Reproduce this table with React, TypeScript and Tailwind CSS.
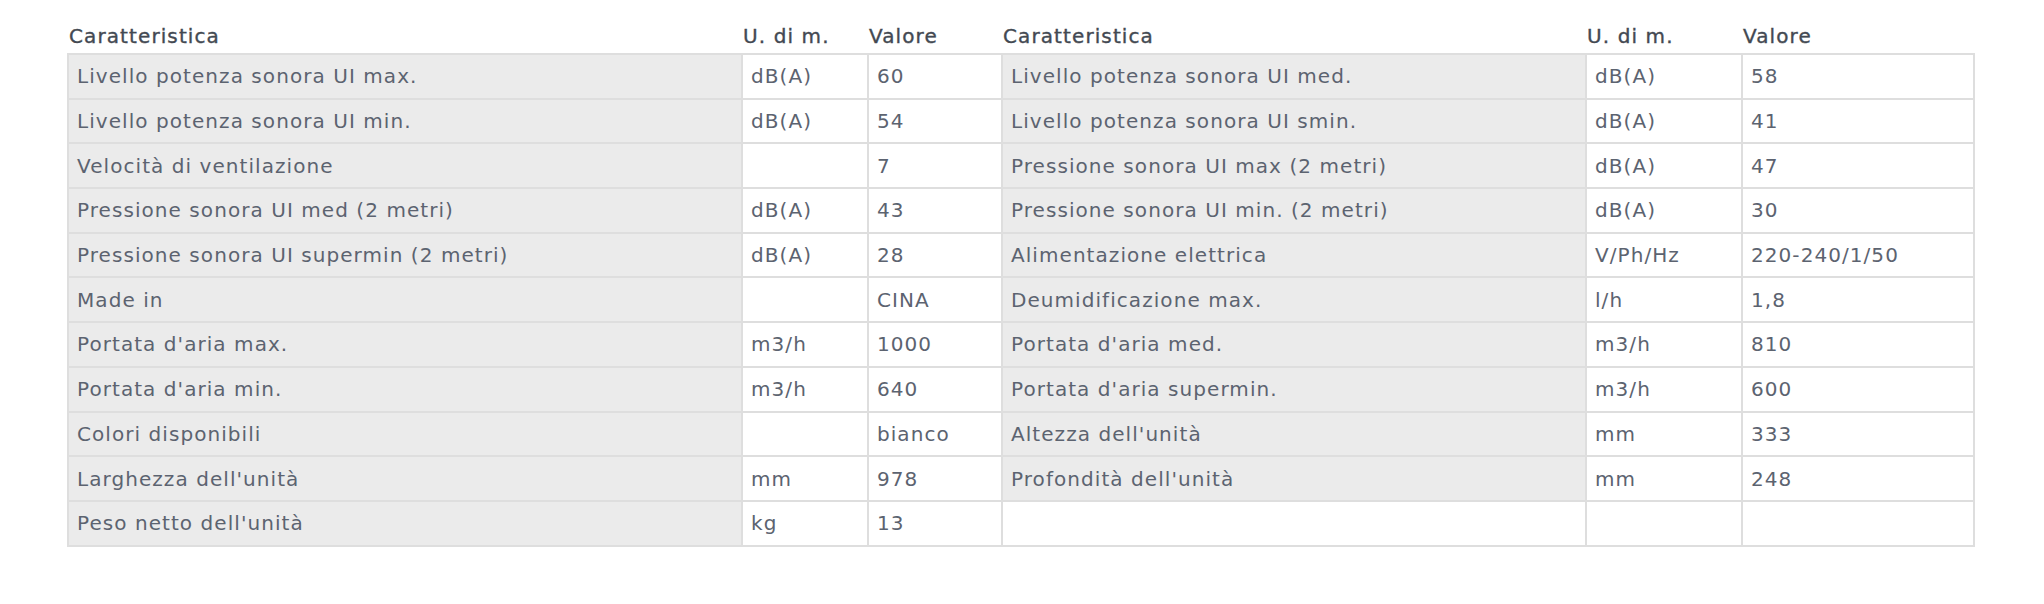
import React from "react";

type Row = [string, string, string, string, string, string];

const rows: Row[] = [
  ["Livello potenza sonora UI max.", "dB(A)", "60", "Livello potenza sonora UI med.", "dB(A)", "58"],
  ["Livello potenza sonora UI min.", "dB(A)", "54", "Livello potenza sonora UI smin.", "dB(A)", "41"],
  ["Velocità di ventilazione", "", "7", "Pressione sonora UI max (2 metri)", "dB(A)", "47"],
  ["Pressione sonora UI med (2 metri)", "dB(A)", "43", "Pressione sonora UI min. (2 metri)", "dB(A)", "30"],
  ["Pressione sonora UI supermin (2 metri)", "dB(A)", "28", "Alimentazione elettrica", "V/Ph/Hz", "220-240/1/50"],
  ["Made in", "", "CINA", "Deumidificazione max.", "l/h", "1,8"],
  ["Portata d'aria max.", "m3/h", "1000", "Portata d'aria med.", "m3/h", "810"],
  ["Portata d'aria min.", "m3/h", "640", "Portata d'aria supermin.", "m3/h", "600"],
  ["Colori disponibili", "", "bianco", "Altezza dell'unità", "mm", "333"],
  ["Larghezza dell'unità", "mm", "978", "Profondità dell'unità", "mm", "248"],
  ["Peso netto dell'unità", "kg", "13", "", "", ""],
];

const headers = ["Caratteristica", "U. di m.", "Valore", "Caratteristica", "U. di m.", "Valore"];

export default function App() {
  return (
    <div
      className="w-[2044px] h-[604px] bg-white pt-[21px] pl-[67px]"
      style={{ fontFamily: '"DejaVu Sans", "Liberation Sans", sans-serif' }}
    >
      <table className="table-fixed border-collapse w-[1906px] text-[20px] leading-none">
        <colgroup>
          <col className="w-[674px]" />
          <col className="w-[126px]" />
          <col className="w-[134px]" />
          <col className="w-[584px]" />
          <col className="w-[156px]" />
          <col className="w-[232px]" />
        </colgroup>
        <thead>
          <tr className="h-[33px]">
            {headers.map((h, i) => (
              <th
                key={i}
                className="text-left align-bottom font-normal text-[#434952] pl-[1px] pb-[7px] border-b-2 border-[#dedede] tracking-[0.055em] [-webkit-text-stroke:0.35px_#434952]"
              >
                {h}
              </th>
            ))}
          </tr>
        </thead>
        <tbody>
          {rows.map((r, ri) => (
            <tr key={ri} className="h-[44.7px]">
              {r.map((c, ci) => {
                const isName = ci === 0 || ci === 3;
                const gray = isName && c !== "";
                return (
                  <td
                    key={ci}
                    className={
                      "border-2 border-[#dedede] px-[8px] align-middle font-normal text-[#5c6370] whitespace-nowrap tracking-[0.053em] " +
                      (gray ? "bg-[#ebebeb]" : "bg-white")
                    }
                  >
                    {c}
                  </td>
                );
              })}
            </tr>
          ))}
        </tbody>
      </table>
    </div>
  );
}
